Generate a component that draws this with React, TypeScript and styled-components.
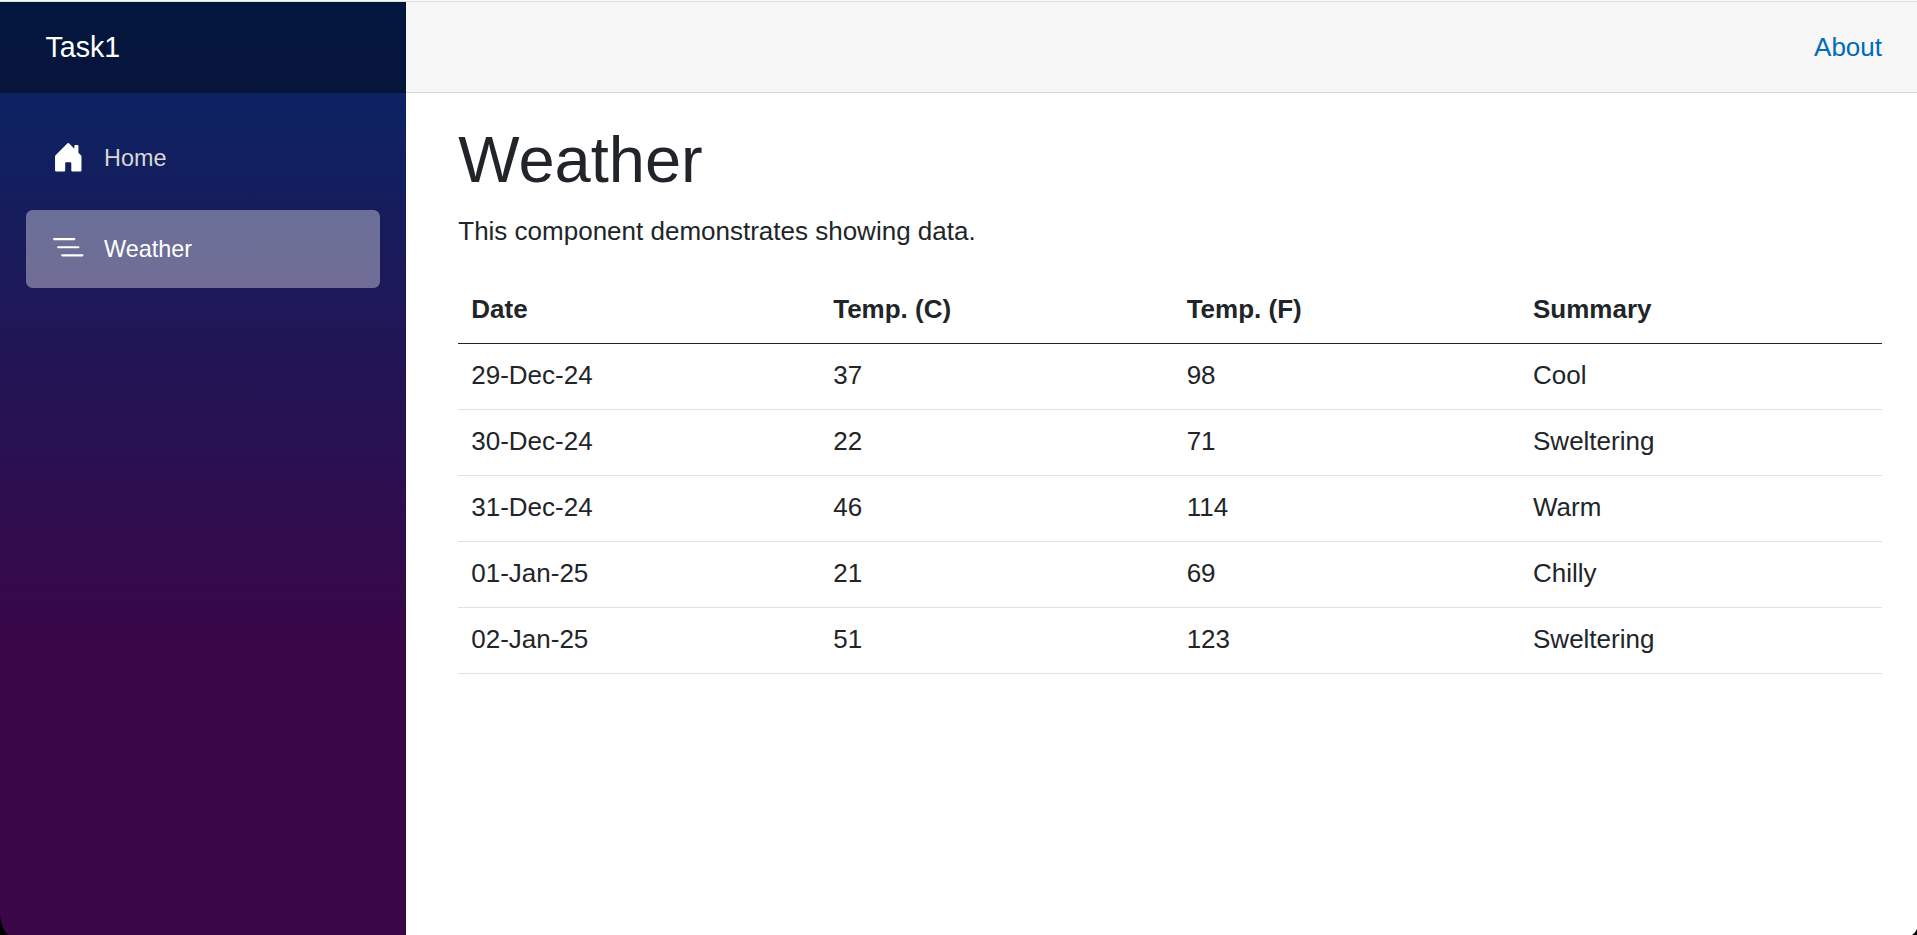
import React from "react";
import styled, { createGlobalStyle } from "styled-components";

const GlobalStyle = createGlobalStyle`
  html { font-size: 26px; }
  *, *::before, *::after { box-sizing: border-box; }
  body {
    margin: 0;
    overflow: hidden;
    background: #fff;
    color: #212529;
    font-family: "Liberation Sans", Arial, sans-serif;
    line-height: 1.5;
  }
`;

const Frame = styled.div`
  position: relative;
  display: flex;
  flex-direction: column;
  height: 100vh;
  overflow: hidden;
`;

const WindowEdge = styled.div`
  flex: none;
  height: 2px;
  background: #f7f7f7;
  border-bottom: 1px solid #e0e0e0;
`;

const Page = styled.div`
  display: flex;
  flex: 1;
  min-height: 0;
`;

const Sidebar = styled.aside`
  flex: none;
  width: 406px;
  background-image: linear-gradient(180deg, rgb(5, 39, 103) 0%, #3a0647 70%);
`;

const BrandBar = styled.div`
  display: flex;
  align-items: center;
  height: 3.5rem;
  padding-left: 45.5px;
  background: rgba(0, 0, 0, 0.4);
`;

const Brand = styled.a`
  color: #fff;
  font-size: 1.1rem;
`;

const Nav = styled.nav`
  display: flex;
  flex-direction: column;
  gap: 0.5rem;
  padding: 1rem;
`;

const NavLink = styled.a<{ $active?: boolean }>`
  display: flex;
  align-items: center;
  height: 3rem;
  padding: 2px 1rem 0;
  border-radius: 6.5px;
  font-size: 0.9rem;
  color: ${(p) => (p.$active ? "#fff" : "#d7d7d7")};
  background: ${(p) => (p.$active ? "rgba(255, 255, 255, 0.37)" : "transparent")};
`;

const NavIcon = styled.svg`
  flex: none;
  width: 1.25rem;
  height: 1.25rem;
  margin: 0 0.75rem 3.25px 0;
  fill: #fff;
`;

const Main = styled.main`
  flex: 1;
  min-width: 0;
`;

const TopRow = styled.header`
  display: flex;
  align-items: center;
  justify-content: flex-end;
  height: 3.5rem;
  padding-right: 35px;
  background: #f7f7f7;
  border-bottom: 1px solid #d6d5d5;
`;

const AboutLink = styled.a`
  color: #006bb7;
`;

const Article = styled.article`
  padding: 27.6px 35px 0 52.25px;
`;

const Title = styled.h1`
  margin: 0 0 0.5rem;
  font-size: 2.5rem;
  font-weight: 500;
  line-height: 1.2;
`;

const Intro = styled.p`
  margin: 0 0 27px;
`;

const Table = styled.table`
  width: 100%;
  border-collapse: collapse;
  text-align: left;
`;

const HeadCell = styled.th`
  padding: 12px 13px 14px;
  border-bottom: 1px solid #212529;
`;

const Cell = styled.td`
  padding: 12px 13px 14px;
  border-bottom: 1px solid #dee2e6;
`;

const Corner = styled.svg<{ $side: "left" | "right" }>`
  position: absolute;
  bottom: 0;
  ${(p) => p.$side}: 0;
`;

const columns = ["Date", "Temp. (C)", "Temp. (F)", "Summary"];

const forecasts = [
  ["29-Dec-24", "37", "98", "Cool"],
  ["30-Dec-24", "22", "71", "Sweltering"],
  ["31-Dec-24", "46", "114", "Warm"],
  ["01-Jan-25", "21", "69", "Chilly"],
  ["02-Jan-25", "51", "123", "Sweltering"],
];

export default function App() {
  return (
    <Frame>
      <GlobalStyle />
      <WindowEdge />
      <Page>
        <Sidebar>
          <BrandBar>
            <Brand>Task1</Brand>
          </BrandBar>
          <Nav>
            <NavLink>
              <NavIcon viewBox="0 0 16 16">
                <path d="M6.5 14.5v-3.505c0-.245.25-.495.5-.495h2c.25 0 .5.25.5.5v3.5a.5.5 0 0 0 .5.5h4a.5.5 0 0 0 .5-.5v-7a.5.5 0 0 0-.146-.354L13 5.793V2.5a.5.5 0 0 0-.5-.5h-1a.5.5 0 0 0-.5.5v1.293L8.354 1.146a.5.5 0 0 0-.708 0l-6 6A.5.5 0 0 0 1.5 7.5v7a.5.5 0 0 0 .5.5h4a.5.5 0 0 0 .5-.5Z" />
              </NavIcon>
              Home
            </NavLink>
            <NavLink $active>
              <NavIcon viewBox="0 0 16 16">
                <path
                  fillRule="evenodd"
                  d="M4.5 11.5A.5.5 0 0 1 5 11h10a.5.5 0 0 1 0 1H5a.5.5 0 0 1-.5-.5zm-2-4A.5.5 0 0 1 3 7h10a.5.5 0 0 1 0 1H3a.5.5 0 0 1-.5-.5zm-2-4A.5.5 0 0 1 1 3h10a.5.5 0 0 1 0 1H1a.5.5 0 0 1-.5-.5z"
                />
              </NavIcon>
              Weather
            </NavLink>
          </Nav>
        </Sidebar>
        <Main>
          <TopRow>
            <AboutLink>About</AboutLink>
          </TopRow>
          <Article>
            <Title>Weather</Title>
            <Intro>This component demonstrates showing data.</Intro>
            <Table>
              <thead>
                <tr>
                  {columns.map((name) => (
                    <HeadCell key={name}>{name}</HeadCell>
                  ))}
                </tr>
              </thead>
              <tbody>
                {forecasts.map((row) => (
                  <tr key={row[0]}>
                    {row.map((value, i) => (
                      <Cell key={i}>{value}</Cell>
                    ))}
                  </tr>
                ))}
              </tbody>
            </Table>
          </Article>
        </Main>
      </Page>
      <Corner $side="left" width="8" height="20" viewBox="0 0 8 20">
        <path d="M0 0C0.6 8 3 15 8 20H0Z" />
      </Corner>
      <Corner $side="right" width="5" height="6" viewBox="0 0 5 6">
        <path d="M5 0C4 2.5 2 4.5 0 6H5Z" />
      </Corner>
    </Frame>
  );
}
